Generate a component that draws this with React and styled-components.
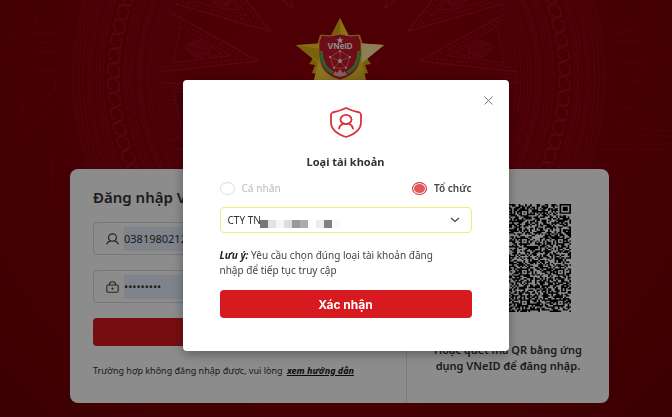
import { useState } from "react";
import styled, { createGlobalStyle } from "styled-components";

const GlobalStyle = createGlobalStyle`
  * {
    box-sizing: border-box;
  }
  body {
    margin: 0;
    font-family: "Noto Sans", "Open Sans", sans-serif;
    color: #333;
  }
  button, input, select {
    font-family: inherit;
    color: inherit;
  }
`;

const Page = styled.div`
  position: relative;
  min-height: 100vh;
  overflow: hidden;
  background: radial-gradient(ellipse at 50% 15%, #90000c 0%, #86000a 45%, #7a0006 75%, #6c0004 100%);
`;

const Backdrop = styled.svg`
  position: absolute;
  inset: 0;
  width: 100%;
  height: 100%;
`;

const Content = styled.div`
  position: relative;
  display: flex;
  flex-direction: column;
  padding: 18px 63px 14px 70px;
`;

const Brand = styled.header`
  display: flex;
  justify-content: center;
  height: 151px;
`;

const Card = styled.main`
  display: grid;
  grid-template-columns: 5fr 3fr;
  min-height: 234px;
  border-radius: 8px;
  background: #fff;
`;

const LoginForm = styled.form`
  display: flex;
  flex-direction: column;
  gap: 15px;
  padding: 18px 23px;
  border-right: 1px solid #e2e2e2;
`;

const Heading = styled.h1`
  margin: 0;
  font-size: 15px;
  line-height: 20px;
  font-weight: 600;
`;

const Field = styled.label`
  display: flex;
  align-items: center;
  gap: 5px;
  height: 33px;
  padding: 4px 4px 4px 12px;
  border: 1px solid #d9d9d9;
  border-radius: 4px;
  svg {
    flex: none;
  }
`;

const FieldInput = styled.input`
  flex: 1;
  min-width: 0;
  height: 24px;
  padding: 0;
  border: 0;
  outline: 0;
  background: #e8f0fe;
  font-size: 11px;
`;

const PrimaryButton = styled.button`
  height: 28px;
  border: 0;
  border-radius: 4px;
  background: #d71920;
  color: #fff;
  font-family: Inter, sans-serif;
  font-size: 12px;
  font-weight: 700;
`;

const HelpText = styled.p`
  margin: 3px 0 0;
  font-size: 9px;
  line-height: 14px;
  a {
    margin-left: 2px;
    color: #111;
    font-style: italic;
    font-weight: 700;
  }
`;

const QrPanel = styled.section`
  display: flex;
  flex-direction: column;
  align-items: center;
  gap: 30px;
  padding-top: 35px;
  p {
    margin: 0;
    font-size: 11px;
    line-height: 16px;
    font-weight: 600;
    text-align: center;
  }
`;

const Overlay = styled.div`
  position: fixed;
  inset: 0;
  display: flex;
  align-items: flex-start;
  justify-content: center;
  padding: 80px 0 0 19px;
  background: rgba(0, 0, 0, 0.45);
`;

const Modal = styled.section`
  display: flex;
  flex-direction: column;
  width: 50%;
  min-width: 326px;
  max-width: 326px;
  padding: 13px 13px 33px;
  border-radius: 4px;
  background: #fff;
  box-shadow: 0 3px 12px rgba(0, 0, 0, 0.35);
`;

const CloseButton = styled.button`
  display: flex;
  align-self: flex-end;
  align-items: center;
  justify-content: center;
  width: 14px;
  height: 14px;
  padding: 0;
  border: 0;
  background: none;
`;

const ModalBody = styled.div`
  display: flex;
  flex-direction: column;
  padding: 0 24px;
`;

const ModalHeader = styled.div`
  display: flex;
  flex-direction: column;
  align-items: center;
  gap: 16px;
  h2 {
    margin: 0;
    font-size: 11px;
    line-height: 16px;
    font-weight: 700;
  }
`;

const RadioRow = styled.div`
  display: flex;
  justify-content: space-between;
  margin-top: 10px;
`;

const RadioLabel = styled.label`
  display: flex;
  align-items: center;
  gap: 7px;
  font-size: 10px;
  line-height: 16px;
  font-weight: ${({ $muted }) => ($muted ? 500 : 600)};
  color: ${({ $muted }) => ($muted ? "#c4c4c4" : "#444")};
`;

const Radio = styled.input`
  appearance: none;
  width: 15px;
  height: 13px;
  margin: 0;
  border: 1px solid #ddd;
  border-radius: 50%;
  &:checked {
    border-color: #d9363e;
    background: #e2565c;
    box-shadow: inset 0 0 0 1px #fff;
  }
`;

const SelectBox = styled.div`
  position: relative;
  display: flex;
  align-items: center;
  height: 26px;
  margin-top: 11px;
  border: 1px solid #f0ea85;
  border-radius: 4px;
  svg {
    position: absolute;
    right: 11px;
    pointer-events: none;
  }
`;

const Select = styled.select`
  appearance: none;
  width: 100%;
  height: 24px;
  padding: 0 28px 0 7px;
  border: 0;
  outline: 0;
  background: none;
  font-size: 10px;
`;

const Mosaic = styled.div`
  position: absolute;
  left: 39px;
  bottom: 4px;
  display: flex;
  pointer-events: none;
`;

const MosaicTile = styled.span`
  width: 8px;
  height: 8px;
  background: ${({ $tone }) => $tone};
`;

const Note = styled.p`
  margin: 15px 0 12px;
  padding-right: 20px;
  font-size: 10px;
  line-height: 15px;
  color: #444;
  strong {
    font-style: italic;
    color: #222;
  }
`;

const mosaicTones = ["#777", "#e2e2e2", "#f7f7f8", "#dcdcdc", "#999", "#ababab", "#fdfdfd", "#ececec", "#808080", "#f8f8fb"];

const CX = 339;
const CY = 77;

const polar = (r, deg) => {
	const a = deg * Math.PI / 180;
	return [CX + r * Math.cos(a), CY - r * Math.sin(a)].map((n) => n.toFixed(2)).join(" ");
};

const range = (n) => Array.from({ length: n }, (_, i) => i);

const DrumRay = ({ angle }) => (
	<g>
		<path d={`M${polar(82, angle)}L${polar(178, angle - 9.6)}M${polar(82, angle)}L${polar(178, angle + 9.6)}`} strokeWidth="1.4"/>
		<path
			d={`M${polar(94, angle)}L${polar(174, angle - 8)}M${polar(94, angle)}L${polar(174, angle + 8)}`}
			strokeWidth="2"
			strokeDasharray="1.6 3.4"
		/>
		<path d={`M${polar(110, angle)}L${polar(166, angle - 6.4)}L${polar(166, angle + 6.4)}Z`}/>
		<path d={`M${polar(120, angle)}L${polar(132, angle - 2.4)}L${polar(132, angle + 2.4)}Z`}/>
		<path
			d={`M${polar(132, angle)}Q${polar(142, angle - 7)} ${polar(158, angle)}Q${polar(142, angle + 7)} ${polar(132, angle)}`}
			fill="#b01c30"
			fillOpacity="0.6"
		/>
		<path d={`M${polar(134, angle)}L${polar(158, angle)}`} stroke="#80000a"/>
	</g>
);

const DrumBackdrop = () => (
	<Backdrop viewBox="0 0 672 417" preserveAspectRatio="xMidYMin slice" aria-hidden="true">
		<g fill="none" stroke="#b31d31" strokeWidth="1" opacity="0.5">
			{range(16).map((i) => <DrumRay key={i} angle={11.25 + i * 22.5}/>)}
			{[178, 182, 189, 192, 207, 210, 215, 236, 240, 243, 256, 260, 266].map((r) =>
				<circle key={r} cx={CX} cy={CY} r={r} opacity="0.7"/>)}
			<circle cx={CX} cy={CY} r="170" strokeWidth="11" strokeDasharray="1 2.4" opacity="0.5"/>
			{[185.5, 212.5, 238, 263].map((r) =>
				<circle key={r} cx={CX} cy={CY} r={r} strokeWidth="2" strokeDasharray="1.5 2.5" opacity="0.7"/>)}
			{range(170).map((i) => (
				<g key={i} transform={`translate(${polar(199.5, i * 360 / 170)})`} opacity="0.8">
					<circle r="3"/>
					<circle r="1"/>
				</g>
			))}
			{range(200).map((i) => (
				<g key={i} transform={`translate(${polar(249.5, i * 1.8)})`} opacity="0.6">
					<circle r="3"/>
					<circle r="1"/>
				</g>
			))}
			{range(96).map((i) => {
				const a = i * 3.75;
				return (
					<path
						key={i}
						d={`M${polar(220, a)}L${polar(231, a + 0.7)}L${polar(231, a + 2.6)}L${polar(227, a + 3.4)}M${polar(231, a + 4.2)}L${polar(220, a + 3.4)}L${polar(220, a + 1.4)}L${polar(224, a + 0.7)}`}
						strokeWidth="1.4"
					/>
				);
			})}
		</g>
		<g fill="none" stroke="#a81a2b" strokeWidth="2" opacity="0.14">
			<path d="M0 8q20-10 34 8t-34 10M0 34h68M4 40l60 4M0 50q30 0 60 2M20 62q14 14 42 5M16 70l14 12 28-12-4 22-24 14M0 98h22l4 34M28 94q-14 18 0 45 8-24 26-30M0 140l18-18M50 150q4 24 0 55"/>
			<path d="M612 28l60-28M612 34q40-6 60-26M616 42h56M618 58l30 8-18 16 42-2M625 64q20-8 47-4M614 106l34 6-10 16 34 4M612 114l24 22h36M600 144h72M602 150h66M610 160q16 22 0 45M636 150q-4 24-18 42"/>
		</g>
	</Backdrop>
);

const BrandStar = () => (
	<svg width="88" height="84" viewBox="0 0 88 84" role="img" aria-label="VNeID">
		<defs>
			<linearGradient id="gold" x1="0" y1="0" x2="1" y2="1">
				<stop offset="0" stopColor="#f2c200"/>
				<stop offset="0.5" stopColor="#ffd43c"/>
				<stop offset="1" stopColor="#c99a10"/>
			</linearGradient>
		</defs>
		<path d="M44 18L64 17 66 24 72 42 75 46 69 47 72 55 44 60 16 55 19 47 13 46 16 42 22 24 24 17Z" fill="#dcae12"/>
		<path d="M44 0L54 20 60 25 88 27 66 45 71 66 73 84H15L17 66 22 45 0 27 28 25 34 20Z" fill="url(#gold)"/>
		<path d="M88 27L66 45 66 35 60 25Z" fill="#ffe79a"/>
		<path d="M44 0L44 20 34 20Z" fill="#d8ad12"/>
		<path d="M0 27L24 31 23 44Z" fill="#dfb313"/>
		<path
			d="M25 17Q34 19 39 17 44 15 49 17 54 19 63 17Q63 21 65 23C65 40 67 55 44 62 21 55 23 40 23 23Q25 21 25 17Z"
			fill="#c9182a"
			stroke="#e8b93d"
			strokeWidth="1"
		/>
		<path d="M25 33Q25 49 37 55M63 33Q63 49 51 55" fill="none" stroke="#5f9b48" strokeWidth="3.5"/>
		<path d="M26 33Q26 48 37 54M62 33Q62 48 51 54" fill="none" stroke="#a9c67b" strokeWidth="1" strokeDasharray="1 1.5"/>
		<path d="M44 19l1 2.300 2.400.1-1.900 1.500.7 2.400-2.200-1.400-2.200 1.400.7-2.400-1.900-1.500 2.400-.1z" fill="#fff"/>
		<path d="M44 33L34 39 38 50 50 50 54 39ZM44 33V43L34 39M44 43L54 39M44 43L38 50M44 43L50 50" fill="none" stroke="#f2a6a6" strokeWidth="0.6"/>
		<g fill="#ffe3e3">
			<circle cx="44" cy="33" r="1.1"/>
			<circle cx="34" cy="39" r="1.1"/>
			<circle cx="54" cy="39" r="1.1"/>
			<circle cx="38" cy="50" r="1"/>
			<circle cx="50" cy="50" r="1"/>
			<circle cx="44" cy="43" r="2"/>
		</g>
		<path d="M37 57l2-4 2 2 3-4 3 4 2-2 2 4-7 2z" fill="#efb0a0"/>
		<text x="44" y="31" textAnchor="middle" fontFamily="Inter, sans-serif" fontSize="8" fontWeight="700" fill="#fff">VNeID</text>
	</svg>
);

const ShieldUserIcon = () => (
	<svg width="32" height="31" viewBox="0 0 32 31" fill="none" stroke="#d9303c" strokeWidth="1.8" strokeLinecap="round" strokeLinejoin="round" aria-hidden="true">
		<path d="M16 1Q22 4 29.500 5.500Q31 6 31 8V15C31 23 24 27.500 16 30C8 27.500 1 23 1 15V8Q1 6 2.500 5.500Q10 4 16 1Z"/>
		<ellipse cx="16" cy="12.500" rx="5.500" ry="4.600"/>
		<path d="M9 21.500Q9.500 18.500 13 16.700M23 21.500Q22.500 18.500 19 16.700"/>
	</svg>
);

const UserIcon = () => (
	<svg width="13" height="12" viewBox="0 0 13 12" fill="none" stroke="#444" strokeWidth="1.2" strokeLinecap="round" aria-hidden="true">
		<ellipse cx="6.500" cy="4.500" rx="4" ry="3.700"/>
		<path d="M.8 11Q1.500 8.500 4.500 7.800M12.200 11Q11.500 8.500 8.500 7.800"/>
	</svg>
);

const LockIcon = () => (
	<svg width="13" height="12" viewBox="0 0 13 12" fill="none" stroke="#444" strokeWidth="1.1" aria-hidden="true">
		<rect x=".8" y="4" width="11.400" height="7.300" rx="1.200"/>
		<path d="M3.500 4V2.800Q3.500.7 6.500.7T9.500 2.800V4"/>
		<circle cx="6.500" cy="7.600" r=".6" fill="#444"/>
	</svg>
);

const QR_SIZE = 77;
const finders = [[3, 3], [73, 3], [3, 73]];
const alignments = [6, 26, 48, 70];

// square rings are decided by the distance from the pattern's centre
const isDark = (x, y) => {
	for (const [fx, fy] of finders) {
		const d = Math.max(Math.abs(x - fx), Math.abs(y - fy));
		if (d <= 4) return d !== 2 && d !== 4;
	}
	for (const ax of alignments) {
		for (const ay of alignments) {
			const d = Math.max(Math.abs(x - ax), Math.abs(y - ay));
			const nearFinder = (ax === 6 && ay === 6) || (ax === 6 && ay === 70) || (ax === 70 && ay === 6);
			if (!nearFinder && d <= 2) return d !== 1;
		}
	}
	if (x === 6 || y === 6) return (x + y) % 2 === 0;
	let h = Math.imul(x + 11, 374761393) ^ Math.imul(y + 7, 668265263);
	h = Math.imul(h ^ (h >>> 13), 1274126177);
	return ((h ^ (h >>> 16)) & 127) < 66;
};

const qrPath = range(QR_SIZE)
	.flatMap((y) => range(QR_SIZE).filter((x) => isDark(x, y)).map((x) => `M${x} ${y}h1v1h-1z`))
	.join("");

const QrCode = () => (
	<svg width="126" height="108" viewBox={`0 0 ${QR_SIZE} ${QR_SIZE}`} preserveAspectRatio="none" role="img" aria-label="Mã QR">
		<path d={qrPath} fill="#000"/>
	</svg>
);

const LoginCard = () => (
	<Card>
		<LoginForm onSubmit={(e) => e.preventDefault()}>
			<Heading>Đăng nhập VNeID</Heading>
			<Field>
				<UserIcon/>
				<FieldInput type="text" aria-label="Số định danh" defaultValue="038198021234"/>
			</Field>
			<Field>
				<LockIcon/>
				<FieldInput type="password" aria-label="Mật khẩu" defaultValue="matkhau12"/>
			</Field>
			<PrimaryButton type="submit">Đăng nhập</PrimaryButton>
			<HelpText>
				Trường hợp không đăng nhập được, vui lòng <a href="#huong-dan">xem hướng dẫn</a>
			</HelpText>
		</LoginForm>
		<QrPanel>
			<QrCode/>
			<p>Hoặc quét mã QR bằng ứng<br/>dụng VNeID để đăng nhập.</p>
		</QrPanel>
	</Card>
);

const AccountTypeModal = ({ onClose }) => {
	const [type, setType] = useState("org");

	return (
		<Overlay>
			<Modal role="dialog" aria-modal="true" aria-labelledby="account-type-title">
				<CloseButton type="button" aria-label="Đóng" onClick={onClose}>
					<svg width="9" height="9" viewBox="0 0 9 9" stroke="#777" strokeWidth="1">
						<path d="M.5.5l8 8M8.500.5l-8 8"/>
					</svg>
				</CloseButton>
				<ModalBody>
					<ModalHeader>
						<ShieldUserIcon/>
						<h2 id="account-type-title">Loại tài khoản</h2>
					</ModalHeader>
					<RadioRow>
						<RadioLabel $muted={type !== "person"}>
							<Radio type="radio" name="account" checked={type === "person"} onChange={() => setType("person")}/>
							Cá nhân
						</RadioLabel>
						<RadioLabel $muted={type !== "org"}>
							<Radio type="radio" name="account" checked={type === "org"} onChange={() => setType("org")}/>
							Tổ chức
						</RadioLabel>
					</RadioRow>
					<SelectBox>
						<Select aria-label="Tổ chức">
							<option>CTY TN</option>
						</Select>
						<Mosaic>
							{mosaicTones.map((tone, i) => <MosaicTile key={i} $tone={tone}/>)}
						</Mosaic>
						<svg width="10" height="6" viewBox="0 0 10 6" fill="none" stroke="#444" strokeWidth="1.3" aria-hidden="true">
							<path d="M1 1L5 4.500 9 1"/>
						</svg>
					</SelectBox>
					<Note>
						<strong>Lưu ý:</strong> Yêu cầu chọn đúng loại tài khoản đăng nhập để tiếp tục truy cập
					</Note>
					<PrimaryButton type="button" onClick={onClose}>Xác nhận</PrimaryButton>
				</ModalBody>
			</Modal>
		</Overlay>
	);
};

const App = () => {
	const [open, setOpen] = useState(true);

	return (
		<Page>
			<GlobalStyle/>
			<DrumBackdrop/>
			<Content>
				<Brand>
					<BrandStar/>
				</Brand>
				<LoginCard/>
			</Content>
			{open && <AccountTypeModal onClose={() => setOpen(false)}/>}
		</Page>
	);
};

export default App;
